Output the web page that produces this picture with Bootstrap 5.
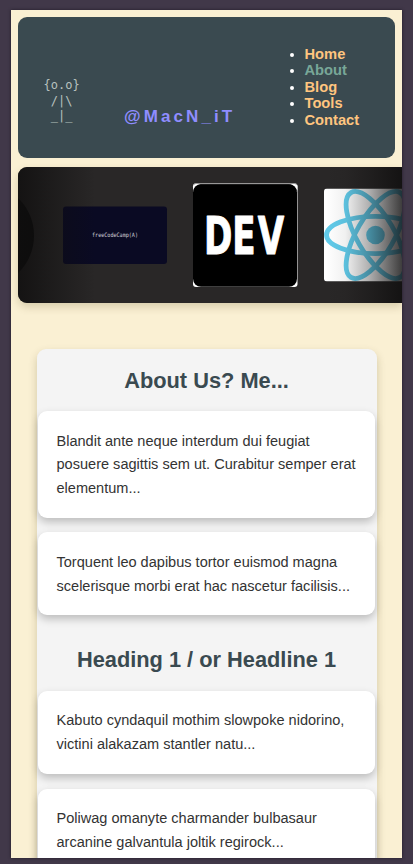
<!DOCTYPE html>
<html lang="en">
<head>
<meta charset="utf-8">
<meta name="viewport" content="width=device-width, initial-scale=1">
<title>@MacN_iT</title>
<link href="https://cdn.jsdelivr.net/npm/bootstrap@5.3.0/dist/css/bootstrap.min.css" rel="stylesheet">
<style>
body { height: 864px; background: #413849; padding: 10px 11px 6px; font-family: "Liberation Sans", Arial, sans-serif; }
.page { height: 848px; background: #faf0d3; padding: 7px 0 0 7px; box-shadow: 0 0 3px #211b28; }
.site-header { width: 377px; height: 140.5px; border-radius: 9px; background: #3a4a50; }
.owl { font: 12px/15.5px "DejaVu Sans Mono", monospace; color: #b8c1bf; margin: 61px 0 0 25.5px; width: 37px; overflow: visible; }
.handle { font-size: 17px; line-height: 20px; letter-spacing: 3.1px; color: #8f8dff; margin: 90px 0 0 43.5px; width: 120px; }
.menu { margin: 28.5px 0 0 60.5px; padding: 0; font-size: 14.7px; line-height: 16.5px; color: #fff; }
.menu a { color: #ffc57f; }
.menu a.current { color: #78a798; }
.slider { height: 136.5px; margin-top: 9px; border-radius: 9px 0 0 9px; background: #292727; box-shadow: 0 4px 8px rgba(80,65,20,.2); }
.about { width: 340px; height: 560px; margin: 46px 0 0 18.5px; padding: 0 1.5px; border-radius: 9px; background: #f4f4f4; box-shadow: 0 4px 9px rgba(80,65,20,.24); }
.about h2 { font-size: 21.8px; line-height: 26px; color: #3a4a50; }
.title-one { padding-top: 18.5px; margin-bottom: 17.5px; }
.title-two { padding-top: 31.5px; margin-bottom: 18px; }
.post { border-radius: 9px; padding: 18.5px 12px 17px 18.5px; font-size: 14.56px; line-height: 23.8px; color: #333; box-shadow: 0 4px 8px rgba(0,0,0,.23); }
.post + .post { margin-top: 14.5px; }
</style>
<script src="https://cdn.jsdelivr.net/npm/bootstrap@5.3.0/dist/js/bootstrap.bundle.min.js"></script>
</head>
<body class="overflow-hidden m-0">
<div class="page overflow-hidden">
  <header class="site-header d-flex align-items-start">
    <pre class="owl flex-shrink-0 mb-0">{o.o}
 /|\
 _|_</pre>
    <div class="handle fw-bold text-nowrap flex-shrink-0">@MacN_iT</div>
    <ul class="menu fw-bold">
      <li><a class="text-decoration-none" href="#">Home</a></li>
      <li><a class="text-decoration-none current" href="#">About</a></li>
      <li><a class="text-decoration-none" href="#">Blog</a></li>
      <li><a class="text-decoration-none" href="#">Tools</a></li>
      <li><a class="text-decoration-none" href="#">Contact</a></li>
    </ul>
  </header>
  <section class="slider overflow-hidden">
    <svg class="d-block" width="384" height="137" viewBox="18 166.500 384 137">
      <defs>
        <linearGradient id="fadeL"><stop offset="0" stop-color="#0f0e0e" stop-opacity=".8"/><stop offset="1" stop-color="#0f0e0e" stop-opacity="0"/></linearGradient>
        <linearGradient id="fadeR"><stop offset="0" stop-color="#0f0e0e" stop-opacity="0"/><stop offset=".25" stop-color="#0f0e0e" stop-opacity=".06"/><stop offset=".55" stop-color="#0f0e0e" stop-opacity=".32"/><stop offset="1" stop-color="#0f0e0e" stop-opacity=".82"/></linearGradient>
        <clipPath id="tile"><rect x="324" y="188" width="104" height="93" rx="3"/></clipPath>
      </defs>
      <circle cx="-18" cy="235" r="52" fill="#0b0b0b"/>
      <rect x="63" y="206" width="104" height="57.500" rx="3" fill="#0a0a23"/>
      <text x="92" y="236.500" font-family="DejaVu Sans Mono" font-size="6" fill="#d5d5dc" textLength="46" lengthAdjust="spacingAndGlyphs">freeCodeCamp(A)</text>
      <rect x="193" y="182.800" width="104.500" height="103.700" rx="3" fill="#fff"/>
      <rect x="193" y="183" width="104.500" height="8" rx="3" fill="#666"/>
      <path d="M193 190v-4q0-2.500 3-2.500h4zM297.500 190v-4q0-2.500-3-2.500h-4z" fill="#fff"/>
      <rect x="193" y="183.700" width="104" height="102.600" rx="8" fill="#000"/>
      <text transform="translate(204 253.500) scale(.67 1)" dx="0 0 3" font-family="DejaVu Sans" font-weight="700" font-size="51" fill="#fff" stroke="#fff" stroke-width="1" stroke-linejoin="round">DEV</text>
      <g clip-path="url(#tile)">
        <rect x="324" y="188" width="104" height="93" fill="#fff"/>
        <g fill="none" stroke="#61cbea" stroke-width="4.800">
          <ellipse cx="375.500" cy="234.500" rx="49" ry="18.700"/>
          <ellipse cx="375.500" cy="234.500" rx="49" ry="18.700" transform="rotate(60 375.500 234.500)"/>
          <ellipse cx="375.500" cy="234.500" rx="49" ry="18.700" transform="rotate(120 375.500 234.500)"/>
        </g>
        <circle cx="375.500" cy="234.500" r="9.300" fill="#61cbea"/>
      </g>
      <rect x="18" y="166" width="77" height="138" fill="url(#fadeL)"/>
      <rect x="326" y="166" width="77" height="138" fill="url(#fadeR)"/>
    </svg>
  </section>
  <main class="about">
    <h2 class="title-one fw-bold text-center">About Us? Me...</h2>
    <p class="post bg-white mb-0">Blandit ante neque interdum dui feugiat<br>posuere sagittis sem ut. Curabitur semper erat<br>elementum...</p>
    <p class="post bg-white mb-0">Torquent leo dapibus tortor euismod magna<br>scelerisque morbi erat hac nascetur facilisis...</p>
    <h2 class="title-two fw-bold text-center">Heading 1 / or Headline 1</h2>
    <p class="post bg-white mb-0">Kabuto cyndaquil mothim slowpoke nidorino,<br>victini alakazam stantler natu...</p>
    <p class="post bg-white mb-0">Poliwag omanyte charmander bulbasaur<br>arcanine galvantula joltik regirock...</p>
  </main>
</div>
</body>
</html>
